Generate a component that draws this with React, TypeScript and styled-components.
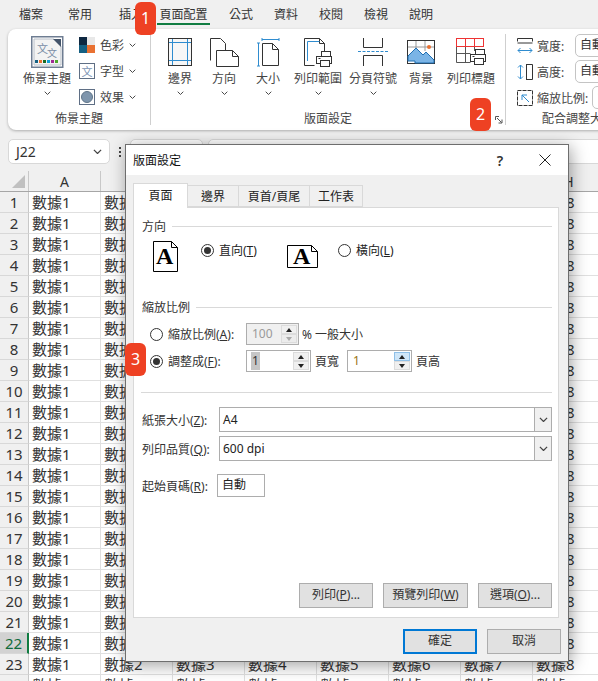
import React from "react";
import styled, { createGlobalStyle } from "styled-components";

const Global = createGlobalStyle`
  html, body { margin: 0; padding: 0; background: #fff; }
  body { font-family: "Noto Sans", "Noto Sans CJK TC", sans-serif; font-size: 12px; color: #262626; }
  * { box-sizing: border-box; }
`;

const Page = styled.div`
  position: relative; width: 598px; height: 681px; overflow: hidden; background: #f0f0f0;
  display: flex; flex-direction: column;
`;

/* ---------- menu tabs ---------- */
const TabBar = styled.div`display: flex; height: 29px; padding-left: 7px; flex: none;`;
const MenuTab = styled.div<{ $w: number; $on?: boolean }>`
  position: relative; width: ${p => p.$w}px; text-align: center; line-height: 30px; font-size: 12px; color: #333;
  ${p => p.$on ? `&::after { content: ""; position: absolute; left: 0; right: 0; top: 23px; height: 2px; background: #107c41; }` : ""}
`;

/* ---------- ribbon ---------- */
const Ribbon = styled.div`
  display: flex; height: 101px; flex: none; width: 640px; margin-left: 8px; padding-top: 5px;
  background: #fff; border-radius: 8px 0 0 8px; box-shadow: 0 1px 3px rgba(0,0,0,.28);
`;
const Group = styled.div<{ $w: number; $end?: boolean }>`
  position: relative; width: ${p => p.$w}px; height: 91px; flex: none;
  display: flex; flex-direction: column; border-right: ${p => p.$end ? "0" : "1px solid #cfcfcf"};
`;
const GroupBody = styled.div<{ $pl: number }>`display: flex; height: 71px; padding-left: ${p => p.$pl}px; flex: none;`;
const GroupLabel = styled.div<{ $align?: string; $pl?: number }>`
  height: 17px; line-height: 17px; font-size: 12px; color: #444; margin-top: 5px;
  text-align: ${p => p.$align ?? "center"}; padding-left: ${p => p.$pl ?? 0}px; white-space: nowrap;
`;
const BigButton = styled.div<{ $w: number }>`
  width: ${p => p.$w}px; display: flex; flex-direction: column; align-items: center; flex: none;
`;
const BigIcon = styled.div`height: 36px; display: flex; align-items: center; justify-content: center; padding: 2px 0;`;
const BigLabel = styled.div`height: 17px; line-height: 17px; font-size: 12px; color: #444; white-space: nowrap;`;
const ChevronRow = styled.div`height: 13px; display: flex; align-items: center; justify-content: center;`;
const SmallCol = styled.div`display: flex; flex-direction: column; gap: 10px; padding-top: 3px; margin-left: 1px;`;
const SmallItem = styled.div`display: flex; align-items: center; height: 16px; gap: 5px; color: #444; font-size: 12px;`;
const FitRow = styled.div`display: flex; align-items: center; height: 23px; color: #444; font-size: 12px; margin-bottom: 3px;`;
const FitCol = styled.div`display: flex; flex-direction: column; padding-left: 11px;`;
const FitLabel = styled.span<{ $w: number }>`width: ${p => p.$w}px; margin-left: 4px; white-space: nowrap;`;
const FitBox = styled.div<{ $gray?: boolean }>`
  width: 60px; height: 23px; border: 1px solid #c4c4c4; border-radius: 5px; padding-left: 4px; line-height: 20px;
  color: ${p => p.$gray ? "#aaa" : "#333"}; background: #fff; flex: none;
`;
const Launcher = styled.svg`position: absolute; right: 2px; bottom: 1px;`;

/* ---------- formula row ---------- */
const FormulaRow = styled.div`display: flex; align-items: flex-start; height: 41px; padding: 9px 0 0 8px; flex: none;`;
const NameBox = styled.div`
  width: 102px; height: 25px; flex: none; background: #fff; border: 1px solid #d8d8d8; border-radius: 5px;
  display: flex; align-items: center; justify-content: space-between; padding: 0 7px 0 7px; font-size: 14px; color: #333;
`;
const Dots = styled.div`
  width: 20px; height: 25px; flex: none; display: flex; flex-direction: column; align-items: center; justify-content: center; gap: 2px;
  & > i { width: 2px; height: 2px; background: #444; display: block; }
`;
const EmptyBox = styled.div<{ $w: number }>`
  width: ${p => p.$w}px; height: 25px; background: #fff; border: 1px solid #d8d8d8; border-radius: 5px; margin-right: 5px; flex: none;
`;

/* ---------- sheet ---------- */
const Sheet = styled.div`flex: 1; background: #fff; overflow: hidden;`;
const HeaderRow = styled.div`display: flex; height: 21px; background: #f0f0f0; border-bottom: 1px solid #a6a6a6;`;
const Corner = styled.div`position: relative; width: 29px; flex: none; border-right: 1px solid #c8c8c8;
  &::after { content: ""; position: absolute; right: 3px; bottom: 3px; border-style: solid; border-width: 0 0 13px 13px; border-color: transparent transparent #c0c0c0 transparent; }
`;
const ColHead = styled.div`width: 72px; flex: none; text-align: center; line-height: 21px; font-size: 14px; color: #333; border-right: 1px solid #c8c8c8;`;
const DataRow = styled.div`display: flex; height: 21px;`;
const RowHead = styled.div<{ $sel?: boolean }>`
  width: 29px; flex: none; text-align: center; line-height: 21px; font-size: 15px;
  background: ${p => p.$sel ? "#d2d2d2" : "#f0f0f0"}; color: ${p => p.$sel ? "#0f6b3a" : "#333"};
  border-right: ${p => p.$sel ? "2px solid #107c41" : "1px solid #c8c8c8"}; border-bottom: 1px solid #d8d8d8;
`;
const Cell = styled.div`
  width: 72px; flex: none; padding-left: 3px; line-height: 21px; font-size: 15px; color: #333; white-space: nowrap;
  border-right: 1px solid #e0e0e0; border-bottom: 1px solid #e0e0e0; overflow: hidden;
`;

/* ---------- badges ---------- */
const Badge = styled.div<{ $x: number; $y: number }>`
  position: absolute; left: ${p => p.$x}px; top: ${p => p.$y}px; width: 21px; height: 33px; border-radius: 6px;
  background: #ee4123; color: #fff; font-size: 16px; text-align: center; line-height: 33px; z-index: 5;
`;

/* ---------- dialog ---------- */
const Dialog = styled.div`
  position: absolute; left: 125px; top: 144px; width: 444px; height: 518px; z-index: 3;
  display: flex; flex-direction: column; background: #f0f0f0; border: 1px solid #6e6e6e;
  box-shadow: 2px 3px 16px rgba(0,0,0,.38);
`;
const TitleBar = styled.div`
  height: 30px; flex: none; background: #fff; display: flex; align-items: center; padding-left: 7px; font-size: 12px; color: #111;
`;
const TitleText = styled.div`flex: 1;`;
const HelpMark = styled.div`width: 30px; text-align: center; font-size: 14px; font-weight: 600; color: #333; margin-right: 15px;`;
const CloseBtn = styled.div`width: 30px; margin-right: 8px; display: flex; justify-content: center;`;
const Body = styled.div`flex: 1; display: flex; flex-direction: column; padding: 8px 7px 0 7px;`;
const DlgTabs = styled.div`display: flex; align-items: flex-end; height: 25px; flex: none; position: relative; z-index: 1;`;
const DlgTab = styled.div<{ $w: number; $on?: boolean }>`
  width: ${p => p.$w}px; height: ${p => p.$on ? 25 : 22}px; margin-bottom: ${p => p.$on ? 0 : 1}px; text-align: center;
  line-height: ${p => p.$on ? 23 : 22}px; font-size: 12px; color: #222;
  background: ${p => p.$on ? "#fff" : "#f0f0f0"};
  border: 1px solid #d9d9d9; border-bottom: ${p => p.$on ? "0" : "1px solid #d9d9d9"};
  margin-left: ${p => p.$on ? 0 : -1}px;
`;
const Panel = styled.div`
  width: 426px; height: 411px; margin-top: -1px; flex: none; background: #fff; border: 1px solid #d9d9d9;
  padding: 9px 6px 9px 8px; display: flex; flex-direction: column;
`;
const SectionHead = styled.div<{ $mt?: number }>`
  display: flex; align-items: center; gap: 6px; height: 18px; flex: none; margin-top: ${p => p.$mt ?? 0}px; color: #333;
  &::after { content: ""; flex: 1; height: 1px; background: #d9d9d9; }
`;
const OrientRow = styled.div`display: flex; align-items: flex-start; height: 31px; margin-top: 6px; flex: none;`;
const PageIcon = styled.svg<{ $ml: number; $mt?: number }>`flex: none; margin-left: ${p => p.$ml}px; margin-top: ${p => p.$mt ?? 0}px;`;
const Option = styled.div<{ $ml: number; $w: number }>`
  display: flex; align-items: center; gap: 5px; height: 18px; margin-left: ${p => p.$ml}px; width: ${p => p.$w}px; flex: none; color: #222; white-space: nowrap;
`;
const Radio = styled.span<{ $on?: boolean }>`
  width: 13px; height: 13px; border: 1px solid #333; border-radius: 50%; flex: none; display: flex; align-items: center; justify-content: center; background: #fff;
  &::after { content: ""; width: 7px; height: 7px; border-radius: 50%; background: ${p => p.$on ? "#333" : "transparent"}; }
`;
const ScaleRow = styled.div<{ $mt: number }>`display: flex; align-items: center; height: 22px; margin-top: ${p => p.$mt}px; padding-left: 8px; flex: none; color: #333; white-space: nowrap;`;
const ScaleLabel = styled.span`width: 78px; margin-left: 5px; flex: none;`;
const Spin = styled.div<{ $w: number; $off?: boolean }>`
  width: ${p => p.$w}px; height: 22px; flex: none; display: flex; align-items: center; justify-content: space-between;
  border: 1px solid #adadad; padding: 1px; background: ${p => p.$off ? "#f0f0f0" : "#fff"};
  color: ${p => p.$off ? "#9a9a9a" : "#333"};
`;
const SpinValue = styled.span<{ $sel?: boolean; $warm?: boolean }>`
  margin-left: 3px; line-height: 18px; padding: 0 1px; background: ${p => p.$sel ? "#c6c6c6" : "transparent"};
  color: ${p => p.$warm ? "#9a7417" : "inherit"};
`;
const SpinBtns = styled.div`display: flex; flex-direction: column; width: 16px; height: 18px; flex: none;`;
const SpinBtn = styled.div<{ $dim?: boolean; $hot?: boolean; $up?: boolean }>`
  flex: 1; display: flex; align-items: center; justify-content: center;
  background: ${p => p.$hot ? "#cfe6f8" : p.$dim ? "#ececec" : "#f0f0f0"};
  border: 1px solid ${p => p.$hot ? "#8fc0e8" : "#dcdcdc"};
  &::after { content: ""; border-style: solid; border-color: transparent;
    border-width: ${p => p.$up ? "0 3.5px 4px 3.5px" : "4px 3.5px 0 3.5px"};
    ${p => p.$up ? `border-bottom-color: ${p.$dim ? "#aaa" : "#222"};` : `border-top-color: ${p.$dim ? "#aaa" : "#222"};`}
  }
`;
const After = styled.span<{ $ml: number; $mr?: number }>`margin-left: ${p => p.$ml}px; margin-right: ${p => p.$mr ?? 0}px; flex: none;`;
const Rule = styled.div`height: 1px; background: #d9d9d9; margin: 20px 0 0 -1px; flex: none;`;
const FieldRow = styled.div<{ $mt: number }>`display: flex; align-items: center; margin-top: ${p => p.$mt}px; flex: none; color: #333; white-space: nowrap;`;
const FieldLabel = styled.span<{ $w: number }>`width: ${p => p.$w}px; flex: none;`;
const SelectBox = styled.div`
  width: 333px; height: 25px; border: 1px solid #adadad; display: flex; align-items: center; justify-content: space-between; padding-left: 3px; background: #fff; color: #222;
`;
const SelectArrow = styled.div`
  width: 17px; height: 23px; background: #f0f0f0; border-left: 1px solid #adadad; display: flex; align-items: center; justify-content: center;
`;
const TextBox = styled.div`width: 48px; height: 23px; border: 1px solid #adadad; line-height: 20px; padding-left: 4px; color: #222;`;
const ActionRow = styled.div`display: flex; justify-content: flex-end; gap: 10px; margin-top: auto; flex: none;`;
const Btn = styled.div<{ $w: number; $primary?: boolean }>`
  width: ${p => p.$w}px; height: 25px; flex: none; text-align: center; background: #e1e1e1; color: #333;
  border: ${p => p.$primary ? "2px solid #0078d4" : "1px solid #adadad"}; line-height: ${p => p.$primary ? 20 : 22}px; white-space: nowrap;
`;
const Footer = styled.div`display: flex; justify-content: flex-end; gap: 10px; margin-top: 11px; flex: none;`;

/* ---------- icons ---------- */
const Chev = ({ w = 7, c = "#444" }: { w?: number; c?: string }) => (
  <svg width={w} height={w * 0.6} viewBox="0 0 10 6" fill="none"><path d="M1 1l4 4 4-4" stroke={c} strokeWidth="1.4" /></svg>
);
const Printer = ({ x, y }: { x: number; y: number }) => (
  <g transform={`translate(${x} ${y})`} fill="#fff" stroke="#333" strokeWidth="1">
    <rect x="5.5" y="0.5" width="9" height="5" />
    <rect x="0.5" y="5.5" width="15" height="7" />
    <rect x="4.5" y="9.5" width="9" height="6" />
    <path d="M2.5 7.5h2" />
  </g>
);
const ThemeIcon = () => (
  <svg width="33" height="32" viewBox="0 0 33 32">
    <rect x=".75" y=".75" width="31" height="30.5" fill="#fff" stroke="#6e7d92" strokeWidth="1.5" />
    <path d="M3 3h20l7 7v19H3z" fill="#f3f3f3" stroke="#b9c0c9" />
    <path d="M22 3h8v8z" fill="#44546a" />
    <text x="6" y="17" fontSize="11" fontFamily="Noto Sans CJK TC" fill="#7a8da6">文</text>
    <text x="16" y="21" fontSize="10" fontFamily="Noto Sans CJK TC" fill="#7a8da6">文</text>
    {["#156082", "#e97132", "#196b24", "#0f9ed5", "#a02b93", "#4ea72e"].map((c, i) => (
      <rect key={c} x={4 + i * 4} y="24" width="3" height="3" fill={c} />
    ))}
  </svg>
);
const ColorsIcon = () => (
  <svg width="16" height="16" viewBox="0 0 16 16">
    <rect width="8" height="8" fill="#0e2841" /><rect x="8" width="8" height="8" fill="#e8e8e8" />
    <rect y="8" width="8" height="8" fill="#156082" /><rect x="8" y="8" width="8" height="8" fill="#e97132" />
  </svg>
);
const FontsIcon = () => (
  <svg width="16" height="16" viewBox="0 0 16 16">
    <rect x=".5" y=".5" width="15" height="15" fill="#fff" stroke="#5f6f85" />
    <text x="2.5" y="12.5" fontSize="11" fontFamily="Noto Sans CJK TC" fill="#7a93b3">文</text>
  </svg>
);
const EffectsIcon = () => (
  <svg width="16" height="16" viewBox="0 0 16 16">
    <rect x=".5" y=".5" width="15" height="15" fill="#fff" stroke="#5f6f85" />
    <circle cx="8" cy="8" r="5.5" fill="#7f96ad" stroke="#5f7488" />
  </svg>
);
const MarginsIcon = () => (
  <svg width="24" height="28" viewBox="0 0 24 28" fill="none">
    <rect x=".5" y=".5" width="23" height="27" fill="#f7f7f7" stroke="#333" />
    <path d="M4.5 1v26M19.5 1v26M1 4.5h22M1 22.5h22" stroke="#2f8ccf" />
  </svg>
);
const OrientIcon = () => (
  <svg width="29" height="29" viewBox="0 0 29 29" fill="none" stroke="#333">
    <path d="M.5 22.5V.5h10l5 5v7" fill="#fff" />
    <path d="M6.5 12.5h16l6 6v10h-22z" fill="#fff" />
    <path d="M22.5 12.5v6h6" />
  </svg>
);
const SizeIcon = () => (
  <svg width="23" height="29" viewBox="0 0 23 29" fill="none">
    <path d="M5.5 5.5h10l6 6v16h-16z" fill="#fff" stroke="#333" />
    <path d="M15.5 5.5v6h6" stroke="#333" />
    <path d="M5 1.5h17M5 .0v3M22 0v3M1.5 5v23M0 5h3M0 28h3" stroke="#2f8ccf" />
  </svg>
);
const PrintAreaIcon = () => (
  <svg width="28" height="29" viewBox="0 0 28 29" fill="none">
    <path d="M.5 27.5V.5h15l5 5v8" fill="#fff" stroke="#333" />
    <path d="M15.5.5v5h5M.5 27.5h10" stroke="#333" />
    <path d="M3.5 23V3.5h12" stroke="#2f8ccf" />
    <Printer x={12} y={13} />
  </svg>
);
const BreaksIcon = () => (
  <svg width="30" height="28" viewBox="0 0 30 28" fill="none">
    <path d="M5.5 0v9.5h19V0M5.5 28V17.5h19V28" stroke="#333" />
    <path d="M0 13.5h30" stroke="#2f8ccf" strokeDasharray="3 1.5" />
  </svg>
);
const BackgroundIcon = () => (
  <svg width="28" height="25" viewBox="0 0 28 25" fill="none">
    <rect x=".5" y=".5" width="27" height="23" fill="#fff" stroke="#333" />
    <path d="M9 1v10M18 1v10M1 7h26" stroke="#999" />
    <circle cx="22" cy="7" r="2" fill="#e97132" />
    <path d="M1 16l8-8 7 7 3-3 8 8v3H8v-2H1z" fill="#7ab4e6" stroke="#1f6fb2" />
  </svg>
);
const TitlesIcon = () => (
  <svg width="30" height="28" viewBox="0 0 30 28" fill="none">
    <path d="M.5 8.5v16h14M.5 15.5h14M9.5 9v15M18.5 9v4" stroke="#555" />
    <rect x=".5" y=".5" width="27" height="8" stroke="#e33" />
    <path d="M9.5 1v7M18.5 1v7" stroke="#e33" />
    <Printer x={14} y={11} />
  </svg>
);
const WidthIcon = () => (
  <svg width="16" height="16" viewBox="0 0 16 16" fill="none">
    <path d="M.5 3.5V.5h15v3M.5 5h15" stroke="#333" />
    <path d="M1 12.5h14M3.5 10l-2.5 2.5L3.5 15M12.5 10l2.5 2.5-2.5 2.5" stroke="#2f8ccf" />
  </svg>
);
const HeightIcon = () => (
  <svg width="16" height="16" viewBox="0 0 16 16" fill="none">
    <path d="M3.5 1v14M1 3.5L3.5 1 6 3.5M1 12.5L3.5 15 6 12.5" stroke="#2f8ccf" />
    <path d="M9 .5h6.5v15H9" stroke="#333" />
    <path d="M9.5 0v16" stroke="#333" />
  </svg>
);
const ScaleIcon = () => (
  <svg width="16" height="16" viewBox="0 0 16 16" fill="none">
    <path d="M.5 15.5V.5h15v15z" stroke="#333" strokeDasharray="4 1" />
    <path d="M5 5l7 7M5 10V5h5" stroke="#2f8ccf" />
  </svg>
);
const DocPortrait = () => (
  <PageIcon $ml={11} width="25" height="31" viewBox="0 0 25 31" fill="none">
    <path d="M.5.5h18l6 6v24H.5z" fill="#fff" stroke="#000" />
    <path d="M18.5.5v6h6" stroke="#000" />
    <text x="3" y="23" fontSize="24" fontWeight="700" fontFamily="Liberation Serif" fill="#000">A</text>
  </PageIcon>
);
const DocLandscape = () => (
  <PageIcon $ml={0} $mt={4} width="31" height="23" viewBox="0 0 31 23" fill="none">
    <path d="M.5.5h24l6 6v16H.5z" fill="#fff" stroke="#000" />
    <path d="M24.5.5v6h6" stroke="#000" />
    <text x="6" y="19" fontSize="24" fontWeight="700" fontFamily="Liberation Serif" fill="#000">A</text>
  </PageIcon>
);

const cols = ["A", "B", "C", "D", "E", "F", "G", "H"];
const rows = Array.from({ length: 24 }, (_, i) => i + 1);

const Spinner = ({ dimDown, hotUp }: { dimDown?: boolean; hotUp?: boolean }) => (
  <SpinBtns>
    <SpinBtn $up $hot={hotUp} />
    <SpinBtn $dim={dimDown} />
  </SpinBtns>
);

export default function App() {
  return (
    <Page>
      <Global />
      <TabBar>
        <MenuTab $w={48}>檔案</MenuTab>
        <MenuTab $w={50}>常用</MenuTab>
        <MenuTab $w={52}>插入</MenuTab>
        <MenuTab $w={53} $on>頁面配置</MenuTab>
        <MenuTab $w={62}>公式</MenuTab>
        <MenuTab $w={28}>資料</MenuTab>
        <MenuTab $w={62}>校閱</MenuTab>
        <MenuTab $w={28}>檢視</MenuTab>
        <MenuTab $w={62}>說明</MenuTab>
      </TabBar>

      <Ribbon>
        <Group $w={143}>
          <GroupBody $pl={8}>
            <BigButton $w={62}>
              <BigIcon><ThemeIcon /></BigIcon>
              <BigLabel>佈景主題</BigLabel>
              <ChevronRow><Chev /></ChevronRow>
            </BigButton>
            <SmallCol>
              <SmallItem><ColorsIcon />色彩<Chev /></SmallItem>
              <SmallItem><FontsIcon />字型<Chev /></SmallItem>
              <SmallItem><EffectsIcon />效果<Chev /></SmallItem>
            </SmallCol>
          </GroupBody>
          <GroupLabel>佈景主題</GroupLabel>
        </Group>
        <Group $w={355}>
          <GroupBody $pl={7}>
            <BigButton $w={44}><BigIcon><MarginsIcon /></BigIcon><BigLabel>邊界</BigLabel><ChevronRow><Chev /></ChevronRow></BigButton>
            <BigButton $w={44}><BigIcon><OrientIcon /></BigIcon><BigLabel>方向</BigLabel><ChevronRow><Chev /></ChevronRow></BigButton>
            <BigButton $w={44}><BigIcon><SizeIcon /></BigIcon><BigLabel>大小</BigLabel><ChevronRow><Chev /></ChevronRow></BigButton>
            <BigButton $w={56}><BigIcon><PrintAreaIcon /></BigIcon><BigLabel>列印範圍</BigLabel><ChevronRow><Chev /></ChevronRow></BigButton>
            <BigButton $w={54}><BigIcon><BreaksIcon /></BigIcon><BigLabel>分頁符號</BigLabel><ChevronRow><Chev /></ChevronRow></BigButton>
            <BigButton $w={42}><BigIcon><BackgroundIcon /></BigIcon><BigLabel>背景</BigLabel></BigButton>
            <BigButton $w={58}><BigIcon><TitlesIcon /></BigIcon><BigLabel>列印標題</BigLabel></BigButton>
          </GroupBody>
          <GroupLabel>版面設定</GroupLabel>
          <Launcher width="8" height="8" viewBox="0 0 8 8" fill="none">
            <path d="M.5 4V.5H4M2 2l4.5 4.5M7 3.5V7H3.5" stroke="#555" />
          </Launcher>
        </Group>
        <Group $w={120} $end>
          <GroupBody $pl={0}>
            <FitCol>
              <FitRow><WidthIcon /><FitLabel $w={38}>寬度:</FitLabel><FitBox>自動</FitBox></FitRow>
              <FitRow><HeightIcon /><FitLabel $w={38}>高度:</FitLabel><FitBox>自動</FitBox></FitRow>
              <FitRow><ScaleIcon /><FitLabel $w={55}>縮放比例:</FitLabel><FitBox $gray>100%</FitBox></FitRow>
            </FitCol>
          </GroupBody>
          <GroupLabel $align="left" $pl={36}>配合調整大小</GroupLabel>
        </Group>
      </Ribbon>

      <FormulaRow>
        <NameBox>J22<Chev w={9} /></NameBox>
        <Dots><i /><i /><i /></Dots>
        <EmptyBox $w={73} />
        <EmptyBox $w={400} />
      </FormulaRow>

      <Sheet>
        <HeaderRow>
          <Corner />
          {cols.map(c => <ColHead key={c}>{c}</ColHead>)}
        </HeaderRow>
        {rows.map(r => (
          <DataRow key={r}>
            <RowHead $sel={r === 22}>{r}</RowHead>
            {cols.map((c, i) => <Cell key={c}>數據{i + 1}</Cell>)}
          </DataRow>
        ))}
      </Sheet>

      <Dialog>
        <TitleBar>
          <TitleText>版面設定</TitleText>
          <HelpMark>?</HelpMark>
          <CloseBtn>
            <svg width="12" height="12" viewBox="0 0 12 12" fill="none"><path d="M.5.5l11 11M11.5.5l-11 11" stroke="#222" /></svg>
          </CloseBtn>
        </TitleBar>
        <Body>
          <DlgTabs>
            <DlgTab $w={55} $on>頁面</DlgTab>
            <DlgTab $w={52}>邊界</DlgTab>
            <DlgTab $w={72}>頁首/頁尾</DlgTab>
            <DlgTab $w={54}>工作表</DlgTab>
          </DlgTabs>
          <Panel>
            <SectionHead>方向</SectionHead>
            <OrientRow>
              <DocPortrait />
              <Option $ml={23} $w={86}><Radio $on /><span>直向(<u>T</u>)</span></Option>
              <DocLandscape />
              <Option $ml={20} $w={70}><Radio /><span>橫向(<u>L</u>)</span></Option>
            </OrientRow>

            <SectionHead $mt={26}>縮放比例</SectionHead>
            <ScaleRow $mt={7}>
              <Radio />
              <ScaleLabel>縮放比例(<u>A</u>):</ScaleLabel>
              <Spin $w={53} $off><SpinValue>100</SpinValue><Spinner dimDown /></Spin>
              <After $ml={3}>% 一般大小</After>
            </ScaleRow>
            <ScaleRow $mt={5}>
              <Radio $on />
              <ScaleLabel>調整成(<u>F</u>):</ScaleLabel>
              <Spin $w={65}><SpinValue $sel>1</SpinValue><Spinner /></Spin>
              <After $ml={4} $mr={8}>頁寬</After>
              <Spin $w={65}><SpinValue $warm>1</SpinValue><Spinner hotUp /></Spin>
              <After $ml={4}>頁高</After>
            </ScaleRow>

            <Rule />

            <FieldRow $mt={14}>
              <FieldLabel $w={77}>紙張大小(<u>Z</u>):</FieldLabel>
              <SelectBox>A4<SelectArrow><Chev w={9} /></SelectArrow></SelectBox>
            </FieldRow>
            <FieldRow $mt={4}>
              <FieldLabel $w={77}>列印品質(<u>Q</u>):</FieldLabel>
              <SelectBox>600 dpi<SelectArrow><Chev w={9} /></SelectArrow></SelectBox>
            </FieldRow>
            <FieldRow $mt={13}>
              <FieldLabel $w={75}>起始頁碼(<u>R</u>):</FieldLabel>
              <TextBox>自動</TextBox>
            </FieldRow>

            <ActionRow>
              <Btn $w={74}>列印(<u>P</u>)...</Btn>
              <Btn $w={85}>預覽列印(<u>W</u>)</Btn>
              <Btn $w={74}>選項(<u>O</u>)...</Btn>
            </ActionRow>
          </Panel>
          <Footer>
            <Btn $w={74} $primary>確定</Btn>
            <Btn $w={74}>取消</Btn>
          </Footer>
        </Body>
      </Dialog>

      <Badge $x={135} $y={2}>1</Badge>
      <Badge $x={470} $y={98}>2</Badge>
      <Badge $x={125} $y={343}>3</Badge>
    </Page>
  );
}
